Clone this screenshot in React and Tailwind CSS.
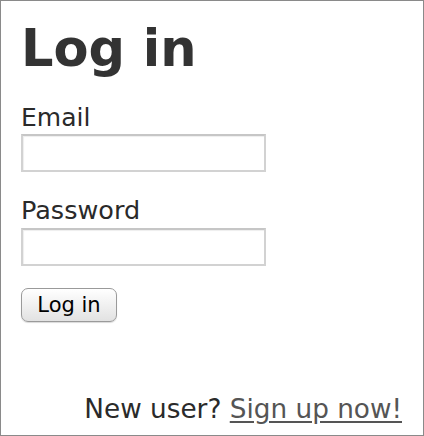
export default function App() {
  const font = { fontFamily: '"DejaVu Sans", Verdana, sans-serif' };
  return (
    <div className="w-[424px] h-[436px] bg-white border border-[#8a8a8a] flex flex-col text-[#333333]" style={font}>
      <div className="pl-[20px] pt-[22px] flex flex-col items-start">
        <h1 className="text-[51px] font-bold leading-[51px] text-[#333333]">Log in</h1>
        <label className="mt-[31px] text-[25px] leading-[25px] text-[#2a2a2a]">Email</label>
        <input className="mt-[4px] w-[245px] h-[38px] border-2 border-[#d2d2d2] border-t-[#c6c6c6] bg-white shadow-[inset_1px_1px_1px_rgba(0,0,0,0.07)] outline-none" />
        <label className="mt-[26px] text-[25.5px] leading-[25px] text-[#2a2a2a]">Password</label>
        <input type="password" className="mt-[5px] w-[245px] h-[38px] border-2 border-[#d2d2d2] border-t-[#c6c6c6] bg-white shadow-[inset_1px_1px_1px_rgba(0,0,0,0.07)] outline-none" />
        <button className="mt-[22px] w-[96px] h-[34px] rounded-[7px] border border-[#9a9a9a] bg-gradient-to-b from-white to-[#e2e2e2] text-[21px] leading-none text-black shadow-[0_1px_1px_rgba(0,0,0,0.15)]">
          Log in
        </button>
      </div>
      <div className="mt-auto pr-[21px] pb-[11px] text-right text-[26.3px] leading-[30px] text-[#2a2a2a]">
        New user? <a href="#" className="text-[#555555] underline underline-offset-[3px]">Sign up now!</a>
      </div>
    </div>
  );
}
